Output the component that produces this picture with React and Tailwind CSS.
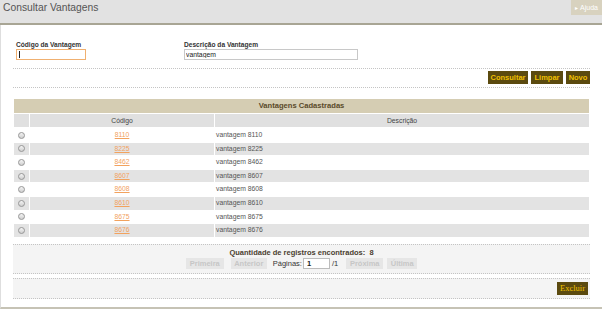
const rows = ['8110', '8225', '8462', '8607', '8608', '8610', '8675', '8676'];

const Radio = () => (
  <span className="block w-[7px] h-[7px] rounded-full border border-[#969696] bg-linear-to-b from-[#f4f4f4] to-[#cfcfcf]" />
);

const PagerButton = ({ children, className = '' }) => (
  <button
    disabled
    className={`h-[11px] bg-[#e6e6e6] text-[#c6c6c6] text-[7.5px] font-bold leading-[11px] ${className}`}
  >
    {children}
  </button>
);

export default function App() {
  return (
    <div className="w-[602px] h-[311px] bg-white overflow-hidden font-['Liberation_Sans',Arial,sans-serif] text-[#333]">
      {/* cabeçalho */}
      <div className="h-[25px] bg-[#e2e2e2] border-b-2 border-[#a8a594] flex justify-between items-start">
        <h1 className="pl-[3px] pt-[1px] text-[10.3px] leading-[14px] text-[#555]">Consultar Vantagens</h1>
        <button className="h-[15px] w-[31px] bg-[#d8d2bf] text-white text-[7px] leading-[15px] text-center">
          <span className="text-[6px] mr-[2px]">▸</span>Ajuda
        </button>
      </div>

      <div className="h-[284px] border-l border-b-2 border-l-[#dedede] border-b-[#c6c3b5] pl-[12px] pr-[12px]">
        {/* filtros */}
        <div className="pt-[15px] pl-[3px] flex">
          <div className="w-[168px]">
            <div className="text-[6.6px] font-bold leading-[9px] text-[#333]">Código da Vantagem</div>
            <div className="relative w-[70px] h-[11px] border border-[#f0b070] bg-white">
              <span className="absolute left-[2px] top-[1px] w-px h-[7px] bg-[#222]" />
            </div>
          </div>
          <div>
            <div className="text-[6.6px] font-bold leading-[9px] text-[#333]">Descrição da Vantagem</div>
            <input
              defaultValue="vantagem"
              className="block w-[174px] h-[11px] border border-[#c8c8c8] bg-white text-[6.8px] leading-[9px] px-px text-[#222] outline-none"
            />
          </div>
        </div>

        <div className="mt-[8px] border-t border-dotted border-[#c4c4c4]" />
        <div className="flex justify-end gap-[3px] pt-[2px] pb-[3px] border-b border-dotted border-[#c4c4c4]">
          {[
            ['Consultar', 'w-[40px]'],
            ['Limpar', 'w-[32px]'],
            ['Novo', 'w-[24px]'],
          ].map(([label, w]) => (
            <button
              key={label}
              className={`${w} h-[13px] bg-[#5b4a0f] text-[#f0c000] text-[7.5px] font-bold leading-[13px] text-center`}
            >
              {label}
            </button>
          ))}
        </div>

        {/* tabela */}
        <div className="mt-[11px] mx-px">
          <div className="h-[14px] bg-[#d5cdb3] text-center text-[7.6px] font-bold leading-[14px] text-[#5a4a2a]">
            Vantagens Cadastradas
          </div>
          <div className="mt-px grid grid-cols-[15px_184px_1fr] gap-x-px h-[13px] text-[6.8px] leading-[13px] text-[#444]">
            <div className="bg-[#e0e0e0]" />
            <div className="bg-[#e0e0e0] text-center">Código</div>
            <div className="bg-[#e0e0e0] text-center">Descrição</div>
          </div>
          <div className="mt-[2px] flex flex-col gap-px">
            {rows.map((code, i) => {
              const bg = i % 2 === 1 ? 'bg-[#e3e3e3]' : '';
              return (
                <div
                  key={code}
                  className="grid grid-cols-[15px_184px_1fr] gap-x-px h-[12.6px] text-[6.8px] leading-[12.6px]"
                >
                  <div className={`${bg} flex items-center justify-center`}>
                    <Radio />
                  </div>
                  <div className={`${bg} text-center`}>
                    <a className="text-[#f2a25e] underline">{code}</a>
                  </div>
                  <div className={`${bg} pl-px text-[#555]`}>vantagem {code}</div>
                </div>
              );
            })}
          </div>
        </div>

        {/* paginação */}
        <div className="mt-[7px] h-[30px] bg-[#f4f4f4] border-y border-dotted border-[#c4c4c4] pt-[3px]">
          <div className="text-center text-[7.5px] font-bold leading-[9px] text-[#4a4030]">
            Quantidade de registros encontrados:&nbsp;&nbsp;8
          </div>
          <div className="mt-px flex justify-center items-center text-[7.5px] leading-[11px] text-[#333]">
            <PagerButton className="w-[38px]">Primeira</PagerButton>
            <PagerButton className="w-[36px] ml-[7px]">Anterior</PagerButton>
            <span className="ml-[6px]">Páginas:</span>
            <input
              defaultValue="1"
              className="ml-px w-[27px] h-[11px] border border-[#bcbcbc] bg-white text-[7.5px] font-bold leading-[9px] px-[3px] text-[#222] outline-none"
            />
            <span className="ml-[2px]">/1</span>
            <PagerButton className="w-[37px] ml-[8px]">Próxima</PagerButton>
            <PagerButton className="w-[30px] ml-[4px]">Última</PagerButton>
          </div>
        </div>

        <div className="mt-[4px] h-[21px] bg-[#f4f4f4] border-y border-dotted border-[#c4c4c4] flex justify-end items-center pr-[2px]">
          <button className="w-[31px] h-[13px] bg-[#5b4a0f] text-[#f0c000] text-[8.5px] leading-[13px] text-center font-['Liberation_Serif','Times_New_Roman',serif]">
            Excluir
          </button>
        </div>
      </div>
    </div>
  );
}
